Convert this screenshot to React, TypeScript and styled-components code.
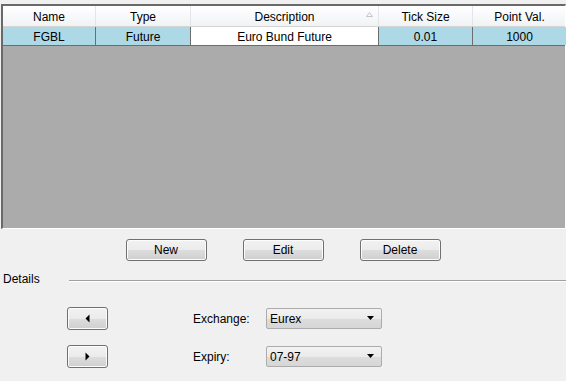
import styled, { createGlobalStyle } from "styled-components";

const GlobalStyle = createGlobalStyle`
  html, body {
    margin: 0;
    padding: 0;
    background: #f0f0f0;
    font-family: "Liberation Sans", Arial, sans-serif;
    font-size: 12px;
    color: #000;
  }
`;

const Page = styled.div`
  width: 566px;
  height: 381px;
  overflow: hidden;
  display: flex;
  flex-direction: column;
`;

const Grid = styled.div`
  margin: 4px 0 0 1px;
  height: 222px;
  border-top: 2px solid #696969;
  border-left: 2px solid #696969;
  border-bottom: 1px solid #ffffff;
  border-right: 1px solid #ffffff;
  background: #ababab;
  display: flex;
  flex-direction: column;
`;

const HeaderRow = styled.div`
  display: flex;
  height: 20px;
  border-bottom: 1px solid #d5d5d5;
  background: linear-gradient(#ffffff, #f7f8fa 55%, #f1f2f4);
`;

const HeaderCell = styled.div<{ $w: number }>`
  width: ${(p) => p.$w}px;
  flex: none;
  position: relative;
  display: flex;
  align-items: center;
  justify-content: center;
  padding-top: 1px;
  border-right: 1px solid #e3e5e8;
  box-sizing: border-box;
  &:last-child {
    border-right: none;
  }
`;

const SortGlyph = styled.svg`
  position: absolute;
  right: 5px;
  top: 6px;
`;

const DataRow = styled.div`
  display: flex;
  height: 18px;
  border-bottom: 1px solid #6d6d6d;
`;

const Cell = styled.div<{ $w: number; $current?: boolean }>`
  width: ${(p) => p.$w}px;
  flex: none;
  display: flex;
  align-items: center;
  justify-content: center;
  padding-top: 1px;
  box-sizing: border-box;
  border-right: 1px solid #6d6d6d;
  background: ${(p) => (p.$current ? "#ffffff" : "#add8e6")};
  &:last-child {
    border-right: none;
  }
`;

const ButtonBar = styled.div`
  display: flex;
  justify-content: center;
  gap: 36px;
  margin-top: 10px;
`;

const Button = styled.button<{ $w?: number; $h?: number }>`
  width: ${(p) => p.$w ?? 81}px;
  height: ${(p) => p.$h ?? 22}px;
  padding: 0;
  border: 1px solid #707070;
  border-radius: 3px;
  background: linear-gradient(#f2f2f2, #ebebeb 50%, #dddddd 51%, #cfcfcf);
  font: inherit;
  color: #000;
  display: flex;
  align-items: center;
  justify-content: center;
  box-shadow: inset 0 0 0 1px #fcfcfc;
`;

const Details = styled.div`
  display: flex;
  align-items: center;
  margin-top: 11px;
  padding-left: 3px;
  height: 14px;
`;

const DetailsRule = styled.div`
  flex: 1;
  margin-left: 29px;
  margin-top: 3px;
  border-top: 1px solid #a0a0a0;
  border-bottom: 1px solid #ffffff;
`;

const Fields = styled.div`
  display: flex;
  flex-direction: column;
  gap: 15px;
  margin-top: 21px;
  padding-left: 67px;
`;

const FieldRow = styled.div`
  display: flex;
  align-items: center;
  height: 23px;
`;

const Label = styled.div`
  width: 73px;
  margin-left: 85px;
`;

const Combo = styled.div`
  width: 116px;
  height: 21px;
  box-sizing: border-box;
  border: 1px solid #acacac;
  border-radius: 2px;
  background: linear-gradient(#f2f2f2, #ebebeb 50%, #dddddd 51%, #d6d6d6);
  display: flex;
  align-items: center;
  justify-content: space-between;
  padding: 0 6px 0 3px;
`;

const columns = [
  { name: "Name", w: 93, value: "FGBL" },
  { name: "Type", w: 95, value: "Future" },
  { name: "Description", w: 188, value: "Euro Bund Future", current: true, sort: true },
  { name: "Tick Size", w: 94, value: "0.01" },
  { name: "Point Val.", w: 93, value: "1000" },
];

const Triangle = ({ dir }: { dir: "left" | "right" | "down" }) => {
  if (dir === "down")
    return (
      <svg width="8" height="5" viewBox="0 0 8 5">
        <path d="M0 0 H7 L3.5 4 Z" fill="#000" />
      </svg>
    );
  return (
    <svg width="5" height="9" viewBox="0 0 5 9">
      {dir === "left" ? (
        <path d="M4.5 0.5 V8.5 L0.5 4.5 Z" fill="#000" />
      ) : (
        <path d="M0.5 0.5 V8.5 L4.5 4.5 Z" fill="#000" />
      )}
    </svg>
  );
};

const App = () => {
  return (
    <Page>
      <GlobalStyle />
      <Grid>
        <HeaderRow>
          {columns.map((c) => (
            <HeaderCell key={c.name} $w={c.w}>
              {c.name}
              {c.sort && (
                <SortGlyph width="7" height="5" viewBox="0 0 7 5">
                  <path d="M0.5 4.5 L3.5 0.5 L6.5 4.5 Z" fill="none" stroke="#c4c4c4" strokeWidth="1" />
                </SortGlyph>
              )}
            </HeaderCell>
          ))}
        </HeaderRow>
        <DataRow>
          {columns.map((c) => (
            <Cell key={c.name} $w={c.w} $current={c.current}>
              {c.value}
            </Cell>
          ))}
        </DataRow>
      </Grid>

      <ButtonBar>
        <Button>New</Button>
        <Button>Edit</Button>
        <Button>Delete</Button>
      </ButtonBar>

      <Details>
        Details
        <DetailsRule />
      </Details>

      <Fields>
        <FieldRow>
          <Button $w={41} $h={23}>
            <Triangle dir="left" />
          </Button>
          <Label>Exchange:</Label>
          <Combo>
            Eurex
            <Triangle dir="down" />
          </Combo>
        </FieldRow>
        <FieldRow>
          <Button $w={41} $h={23}>
            <Triangle dir="right" />
          </Button>
          <Label>Expiry:</Label>
          <Combo>
            07-97
            <Triangle dir="down" />
          </Combo>
        </FieldRow>
      </Fields>
    </Page>
  );
};

export default App;
